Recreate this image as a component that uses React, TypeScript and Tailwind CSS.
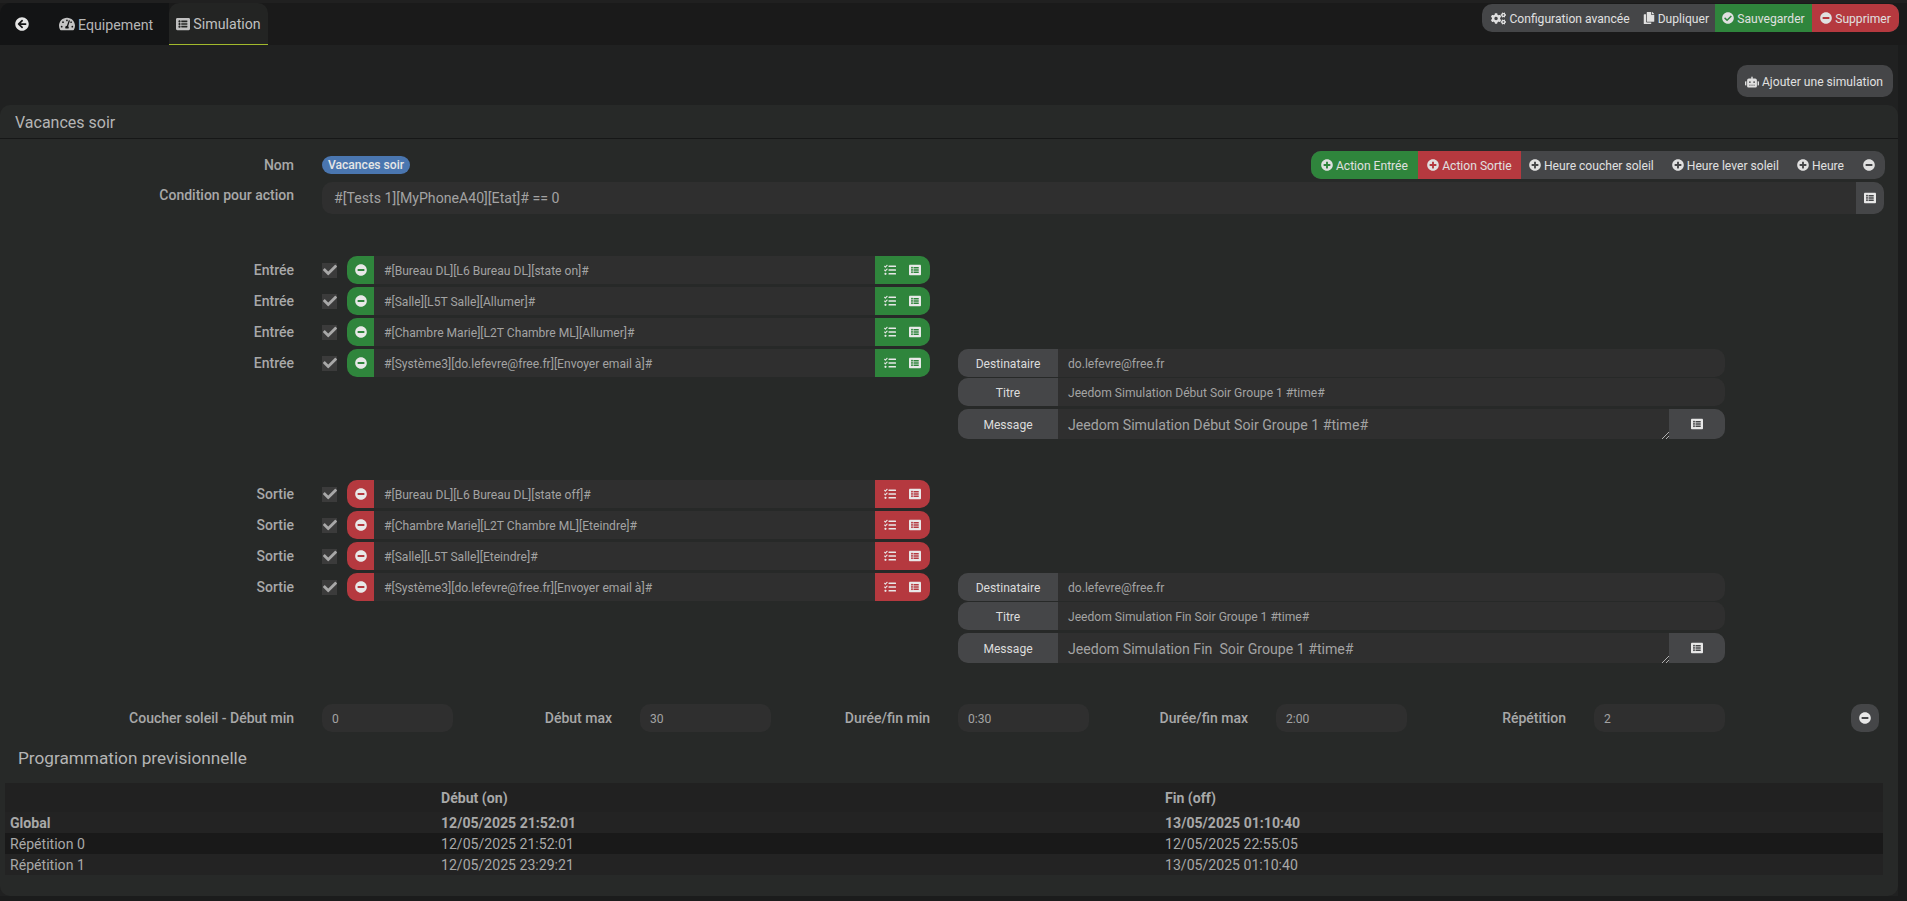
import React from 'react';
import {
  FaArrowCircleLeft,
  FaCheck,
  FaCheckCircle,
  FaCogs,
  FaCopy,
  FaListAlt,
  FaMinusCircle,
  FaPlusCircle,
  FaRobot,
  FaTachometerAlt,
  FaTasks,
} from 'react-icons/fa';

interface ActionBlockProps {
  label: string;
  tone: 'green' | 'red';
  rows: string[];
  title: string;
  message: string;
}

const TopButton: React.FC<{ icon: React.ReactNode; text: string; className?: string }> = ({ icon, text, className = '' }) => (
  <div className={`flex items-center justify-center gap-[3px] h-full text-[12.1px] text-[#e0e0e0] ${className}`}>
    {icon}
    <span className="pt-[2px]">{text}</span>
  </div>
);

const FieldRow: React.FC<{ label: string; value: string }> = ({ label, value }) => (
  <div className="flex h-7 rounded-[10px] overflow-hidden bg-[#2f2f2f]">
    <div className="w-[100px] pt-[2px] bg-[#454648] flex items-center justify-center text-[12.1px] text-[#dcdcdc]">{label}</div>
    <div className="flex-1 pt-[2px] flex items-center pl-[10px] text-[12.1px] text-[#a3a3a3]">{value}</div>
  </div>
);

const ActionBlock: React.FC<ActionBlockProps> = ({ label, tone, rows, title, message }) => {
  const color = tone === 'green' ? 'bg-[#2f853c]' : 'bg-[#b5393f]';
  return (
    <div className="flex">
      <div className="w-[930px] flex flex-col gap-[3px]">
        {rows.map((row) => (
          <div key={row} className="flex items-center h-7">
            <div className="w-[294px] text-right text-[14px] font-medium text-[#a8a8a8]">{label}</div>
            <div className="ml-[28px] w-[15px] h-[15px] bg-[#3b3b3b] flex items-center justify-center text-[#a8a8a8]">
              <FaCheck className="w-[14px] h-[14px] shrink-0" />
            </div>
            <div className="ml-[10px] flex flex-1 h-7 rounded-[10px] overflow-hidden bg-[#2f2f2f]">
              <div className={`w-[27px] flex items-center justify-center text-[#e8e8e8] ${color}`}>
                <FaMinusCircle className="w-3 h-3" />
              </div>
              <div className="flex-1 pt-[2px] flex items-center pl-[10px] text-[12.1px] text-[#a3a3a3]">{row}</div>
              <div className={`w-[55px] flex items-center justify-around pl-[2px] pr-[3px] text-[#e8e8e8] ${color}`}>
                <FaTasks className="w-3 h-3" />
                <FaListAlt className="w-3 h-3" />
              </div>
            </div>
          </div>
        ))}
      </div>
      <div className="ml-[28px] w-[767px] pt-[93px] flex flex-col">
        <FieldRow label="Destinataire" value="do.lefevre@free.fr" />
        <div className="mt-px">
          <FieldRow label="Titre" value={title} />
        </div>
        <div className="mt-[3px] flex h-[30px] rounded-[10px] overflow-hidden bg-[#2f2f2f]">
          <div className="w-[100px] pt-[2px] bg-[#454648] flex items-center justify-center text-[12.1px] text-[#dcdcdc]">Message</div>
          <div className="flex-1 pt-[3px] relative flex items-center pl-[10px] text-[14.15px] text-[#a3a3a3] whitespace-pre">
            {message}
            <svg className="absolute right-0 bottom-0 w-2 h-2" viewBox="0 0 8 8">
              <path d="M1 8 8 1M5 8 8 5" stroke="#b0b0b0" strokeWidth="1" />
            </svg>
          </div>
          <div className="w-[56px] bg-[#454648] flex items-center justify-center text-[#e8e8e8]">
            <FaListAlt className="w-3 h-3" />
          </div>
        </div>
      </div>
    </div>
  );
};

const TimeField: React.FC<{ label: string; value: string; labelWidth: string }> = ({ label, value, labelWidth }) => (
  <div className="flex items-center">
    <div className={`text-right text-[14px] font-medium text-[#a8a8a8] ${labelWidth}`}>{label}</div>
    <div className="ml-[28px] w-[131px] h-7 pt-[2px] rounded-[10px] bg-[#2f2f2f] flex items-center pl-[10px] text-[12.1px] text-[#a3a3a3]">{value}</div>
  </div>
);

const PlanRow: React.FC<{ name: string; start: string; end: string; className?: string }> = ({ name, start, end, className = '' }) => (
  <div className={`flex items-center h-[21px] pt-[2px] text-[14.1px] text-[#a8a8a8] ${className}`}>
    <div className="w-[436px] pl-[5px]">{name}</div>
    <div className="w-[724px]">{start}</div>
    <div>{end}</div>
  </div>
);

const App: React.FC = () => {
  return (
    <div className="h-[901px] overflow-hidden bg-[#1b1c1c] font-['Roboto',sans-serif]">
      <div className="h-[45px] flex justify-between bg-[#1a1a1a] border-t-[3px] border-[#202020]">
        <div className="flex items-end">
          <div className="w-[169px] h-[42px] flex items-center rounded-tl-[10px] bg-[#131415] text-[14.2px] text-[#b5b5b5]">
            <FaArrowCircleLeft className="ml-[15px] w-[14px] h-[14px] text-[#e6e6e6]" />
            <FaTachometerAlt className="ml-[30px] w-4 h-4 text-[#c4c4c4]" />
            <span className="ml-[3px] pt-[3px]">Equipement</span>
          </div>
          <div className="w-[99px] h-[42px] flex items-center justify-center gap-[3px] rounded-t-[10px] bg-[#232423] border-b border-[#a2b92c] text-[14.2px] text-[#c0c0c0]">
            <FaListAlt className="w-[14px] h-[14px]" />
            <span className="pt-[3px]">Simulation</span>
          </div>
        </div>
        <div className="mr-[8px] mt-px h-7 flex rounded-[10px] overflow-hidden bg-[#454648]">
          <TopButton icon={<FaCogs className="w-[15px] h-[15px]" />} text="Configuration avancée" className="pl-[9px] pr-[6px]" />
          <TopButton icon={<FaCopy className="w-3 h-3" />} text="Dupliquer" className="pl-[7px] pr-[6px]" />
          <TopButton icon={<FaCheckCircle className="w-3 h-3" />} text="Sauvegarder" className="w-[97px] bg-[#2f853c]" />
          <TopButton icon={<FaMinusCircle className="w-3 h-3" />} text="Supprimer" className="w-[87px] bg-[#b5393f]" />
        </div>
      </div>

      <div className="w-[1898px] bg-[#202121]">
        <div className="h-[60px] flex justify-end items-start pt-5 pr-[5px]">
          <div className="w-[156px] h-8 pt-[2px] pr-[2px] rounded-[10px] bg-[#454648] flex items-center justify-center gap-[3px] text-[12.1px] text-[#e0e0e0]">
            <FaRobot className="w-[14px] h-[14px] -mt-px" />
            <span>Ajouter une simulation</span>
          </div>
        </div>

        <div className="h-[791px] rounded-[10px] bg-[#272928] flex flex-col">
          <div className="h-[34px] flex items-center pl-[15px] pt-[3px] text-[16px] text-[#b5b5b5] border-b border-[#161717]">Vacances soir</div>

          <div className="mt-3 h-7 flex items-center pr-[13px]">
            <div className="w-[294px] text-right text-[14px] font-medium text-[#a8a8a8]">Nom</div>
            <div className="ml-[28px] h-[18px] w-[88px] rounded-full bg-[#4a76b0] flex items-center justify-center text-[12.1px] font-medium text-[#e6e6e6]">Vacances soir</div>
            <div className="ml-auto h-7 flex rounded-[10px] overflow-hidden bg-[#454648] text-[12.1px] text-[#e0e0e0]">
              <div className="w-[107px] pt-[2px] bg-[#2f853c] flex items-center justify-center gap-[3px]"><FaPlusCircle className="w-3 h-3 -mt-[2px]" />Action Entrée</div>
              <div className="w-[103px] pt-[2px] bg-[#b5393f] flex items-center justify-center gap-[3px]"><FaPlusCircle className="w-3 h-3 -mt-[2px]" />Action Sortie</div>
              <div className="pl-[8px] pr-[9px] pt-[2px] flex items-center gap-[3px]"><FaPlusCircle className="w-3 h-3 -mt-[2px]" />Heure coucher soleil</div>
              <div className="px-[9px] pt-[2px] flex items-center gap-[3px]"><FaPlusCircle className="w-3 h-3 -mt-[2px]" />Heure lever soleil</div>
              <div className="px-[9px] pt-[2px] flex items-center gap-[3px]"><FaPlusCircle className="w-3 h-3 -mt-[2px]" />Heure</div>
              <div className="w-[32px] pl-[10px] flex items-center"><FaMinusCircle className="w-3 h-3" /></div>
            </div>
          </div>

          <div className="mt-[3px] flex pr-[14px]">
            <div className="w-[294px] pt-[3px] text-right text-[14px] font-medium text-[#a8a8a8]">Condition pour action</div>
            <div className="ml-[28px] flex-1 h-8 flex rounded-[10px] overflow-hidden bg-[#2f2f2f]">
              <div className="flex-1 pt-[2px] flex items-center pl-3 text-[14.15px] text-[#a3a3a3]">#[Tests 1][MyPhoneA40][Etat]# == 0</div>
              <div className="w-7 bg-[#454648] flex items-center justify-center text-[#e8e8e8]">
                <FaListAlt className="w-3 h-3" />
              </div>
            </div>
          </div>

          <div className="mt-[42px]">
            <ActionBlock
              label="Entrée"
              tone="green"
              rows={[
                '#[Bureau DL][L6 Bureau DL][state on]#',
                '#[Salle][L5T Salle][Allumer]#',
                '#[Chambre Marie][L2T Chambre ML][Allumer]#',
                '#[Système3][do.lefevre@free.fr][Envoyer email à]#',
              ]}
              title="Jeedom Simulation Début Soir Groupe 1 #time#"
              message="Jeedom Simulation Début Soir Groupe 1 #time#"
            />
          </div>

          <div className="mt-[41px]">
            <ActionBlock
              label="Sortie"
              tone="red"
              rows={[
                '#[Bureau DL][L6 Bureau DL][state off]#',
                '#[Chambre Marie][L2T Chambre ML][Eteindre]#',
                '#[Salle][L5T Salle][Eteindre]#',
                '#[Système3][do.lefevre@free.fr][Envoyer email à]#',
              ]}
              title="Jeedom Simulation Fin Soir Groupe 1 #time#"
              message="Jeedom Simulation Fin  Soir Groupe 1 #time#"
            />
          </div>

          <div className="mt-[41px] flex items-center">
            <TimeField label="Coucher soleil - Début min" value="0" labelWidth="w-[294px]" />
            <TimeField label="Début max" value="30" labelWidth="w-[159px]" />
            <TimeField label="Durée/fin min" value="0:30" labelWidth="w-[159px]" />
            <TimeField label="Durée/fin max" value="2:00" labelWidth="w-[159px]" />
            <TimeField label="Répétition" value="2" labelWidth="w-[159px]" />
            <div className="ml-[126px] w-7 h-7 rounded-[10px] bg-[#454648] flex items-center justify-center text-[#e8e8e8]">
              <FaMinusCircle className="w-3 h-3" />
            </div>
          </div>

          <div className="mt-[14px] pl-[18px] text-[17.2px] leading-6 text-[#b5b5b5]">Programmation previsionnelle</div>

          <div className="mt-[13px] ml-[5px] w-[1878px] bg-[#232323]">
            <div className="flex items-center h-[29px] pt-[2px] bg-[#212121] text-[14.1px] font-bold text-[#a8a8a8]">
              <div className="w-[436px]" />
              <div className="w-[724px]">Début (on)</div>
              <div>Fin (off)</div>
            </div>
            <PlanRow name="Global" start="12/05/2025 21:52:01" end="13/05/2025 01:10:40" className="font-bold" />
            <PlanRow name="Répétition 0" start="12/05/2025 21:52:01" end="12/05/2025 22:55:05" className="bg-[#191919]" />
            <PlanRow name="Répétition 1" start="12/05/2025 23:29:21" end="13/05/2025 01:10:40" />
          </div>
        </div>
      </div>
    </div>
  );
};

export default App;
